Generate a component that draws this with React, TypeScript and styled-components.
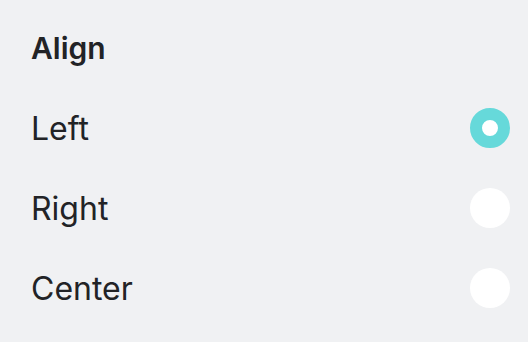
import React, { useState } from 'react'
import styled, { createGlobalStyle } from 'styled-components'

const GlobalStyle = createGlobalStyle`
  html, body {
    margin: 0;
    padding: 0;
    background: #f0f1f3;
  }
  body {
    font-family: Inter, "Noto Sans", sans-serif;
    color: #222326;
  }
`

const options = ['Left', 'Right', 'Center']

const App = () => {
  const [selected, setSelected] = useState('Left')

  return (
    <>
      <GlobalStyle />
      <Panel>
        <Title>Align</Title>
        {options.map(option => (
          <Row key={option} onClick={() => setSelected(option)}>
            <Label>{option}</Label>
            <Radio checked={selected === option} />
          </Row>
        ))}
      </Panel>
    </>
  )
}

export default App

const Panel = styled.div`
  width: 528px;
  height: 342px;
  box-sizing: border-box;
  padding: 8px 18px 0 31px;
  display: flex;
  flex-direction: column;
`

const Title = styled.div`
  height: 80px;
  display: flex;
  align-items: center;
  font-size: 30px;
  font-weight: 600;
`

const Row = styled.div`
  height: 80px;
  display: flex;
  align-items: center;
  justify-content: space-between;
  cursor: pointer;
`

const Label = styled.span`
  font-size: 32px;
  font-weight: 400;
`

const Radio = styled.span<{ checked: boolean }>`
  width: 40px;
  height: 40px;
  border-radius: 50%;
  box-sizing: border-box;
  background: #fff;
  border: ${p => (p.checked ? '12px solid #66d9da' : 'none')};
`
